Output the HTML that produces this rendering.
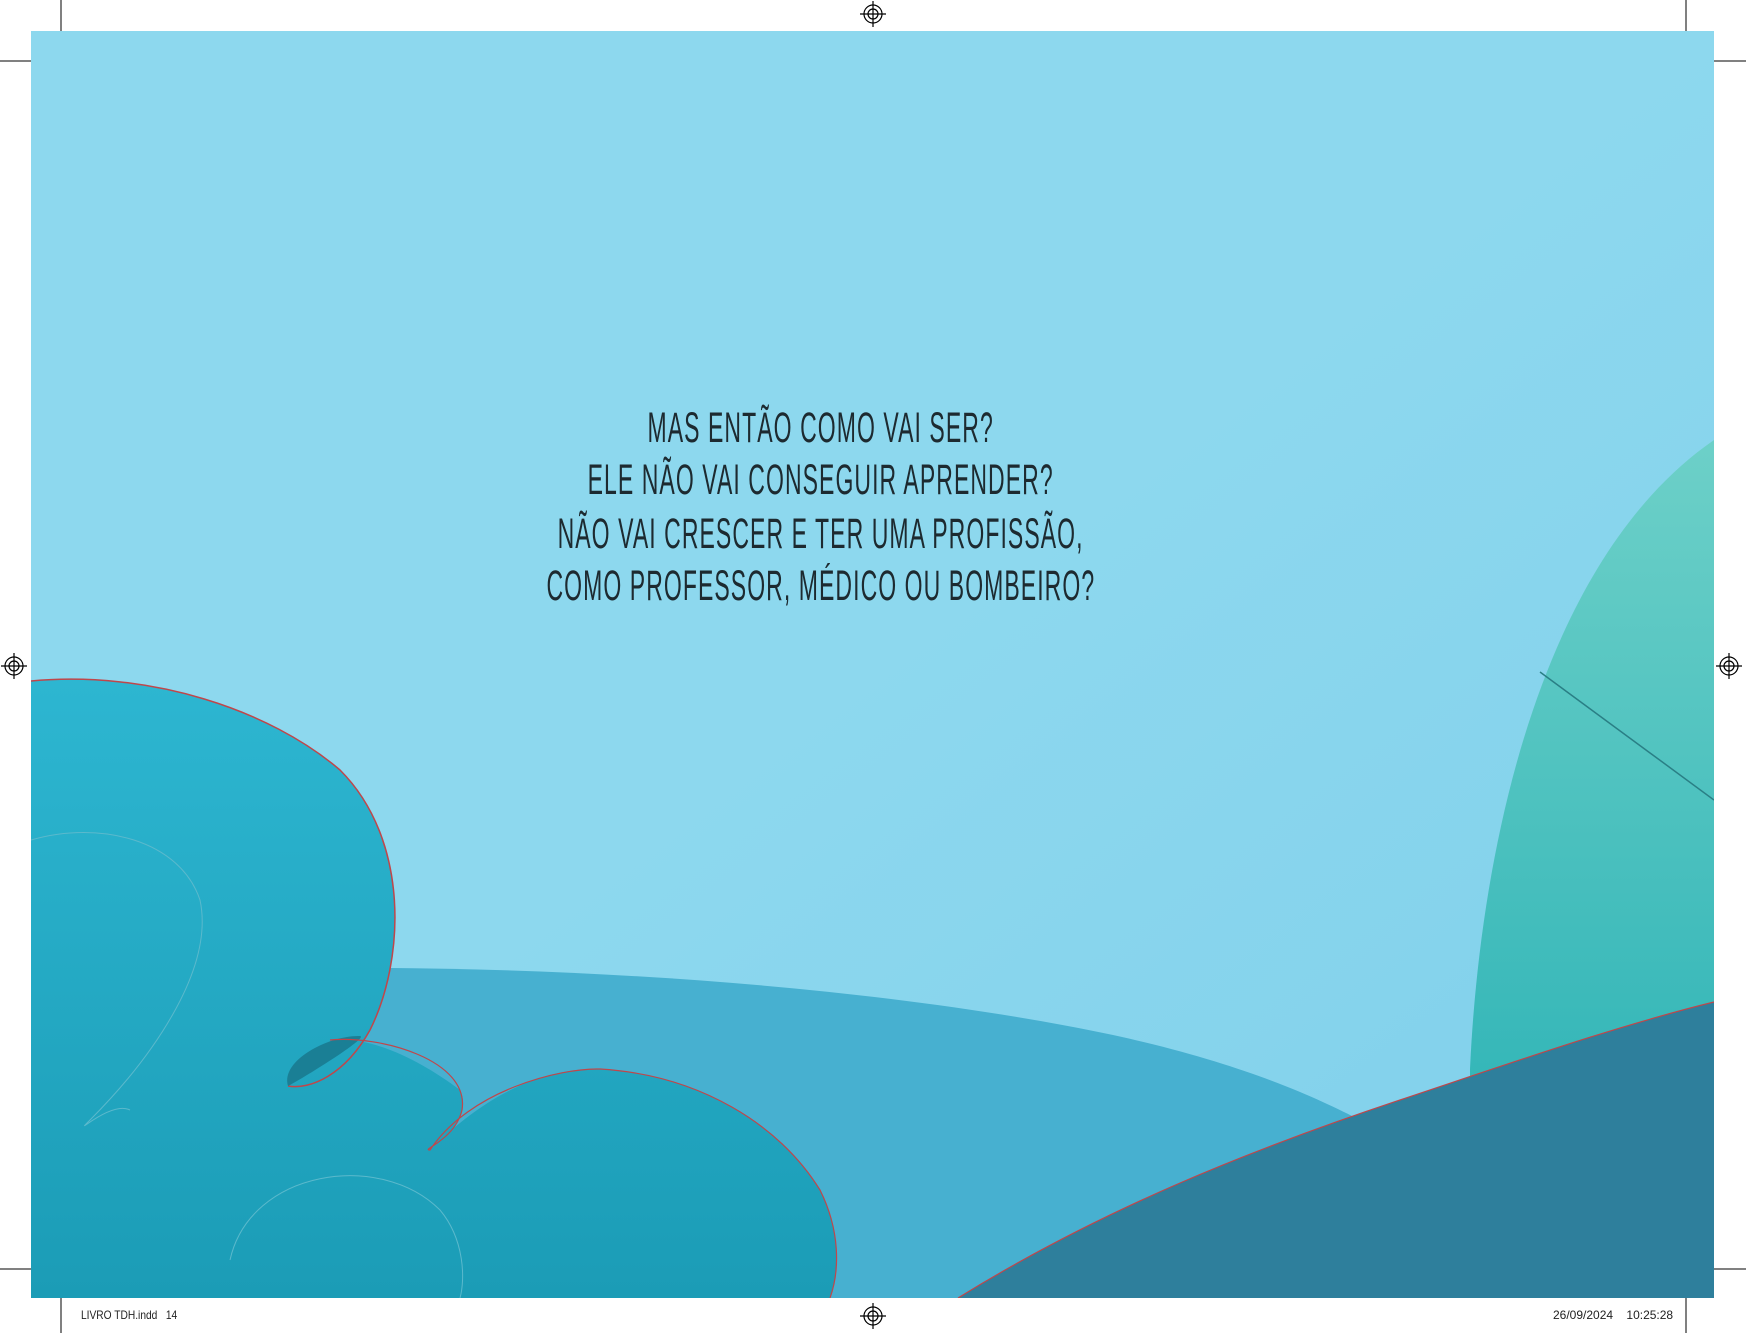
<!DOCTYPE html>
<html><head><meta charset="utf-8"><style>
html,body{margin:0;padding:0;background:#fff;}
body{width:1746px;height:1333px;position:relative;overflow:hidden;font-family:"Liberation Sans",sans-serif;}
.line{position:absolute;left:0;width:1642px;text-align:center;font-size:43px;color:#1d2a30;letter-spacing:2px;}
.line span{display:inline-block;transform:scaleX(0.535);transform-origin:center;white-space:nowrap;}
.ft{position:absolute;font-size:12px;color:#222;transform:scaleX(0.85);transform-origin:left;white-space:nowrap;}
</style></head><body>
<svg width="1746" height="1333" style="position:absolute;left:0;top:0">
<defs>
<linearGradient id="g1" x1="0" y1="0" x2="0" y2="1"><stop offset="0" stop-color="#2db6d1"/><stop offset="1" stop-color="#1b9cb6"/></linearGradient>
<linearGradient id="g2" x1="0" y1="0" x2="0" y2="1"><stop offset="0" stop-color="#6dd0c8"/><stop offset="1" stop-color="#22aeb3"/></linearGradient>
<linearGradient id="sky" x1="0" y1="0" x2="1" y2="1"><stop offset="0.5" stop-color="#8dd8ee"/><stop offset="1" stop-color="#7fcfeb"/></linearGradient>
<clipPath id="art"><rect x="31" y="31" width="1683" height="1267"/></clipPath>
</defs>
<g clip-path="url(#art)">
<rect x="31" y="31" width="1683" height="1267" fill="url(#sky)"/>
<path d="M1470 1069 C1480 850 1540 560 1714 440 L1714 1298 L1470 1298Z" fill="url(#g2)"/>
<path d="M1540 672 L1714 800" stroke="#2a7f85" stroke-width="1.5" fill="none"/>
<path d="M300 968 C600 965 900 990 1113 1035 C1250 1065 1320 1100 1360 1120 L1000 1298 L300 1298Z" fill="#47b0d0"/>
<path d="M31 681 C150 670 270 710 340 770 C410 840 405 960 370 1030 C345 1075 310 1090 288 1086 C270 1082 290 1045 330 1040 C370 1035 420 1060 460 1090 C470 1110 455 1130 430 1150 C500 1080 560 1068 600 1069 C700 1075 780 1125 820 1190 C840 1230 840 1270 830 1298 L31 1298Z" fill="url(#g1)"/>
<path d="M31 681 C150 670 270 710 340 770 C410 840 405 960 370 1030 C345 1075 310 1090 288 1086" stroke="#c0464a" stroke-width="1.5" fill="none"/>
<path d="M288 1086 C280 1060 330 1035 360 1036 C370 1037 300 1080 288 1086Z" fill="#1a7f95"/>
<path d="M330 1040 C380 1035 470 1060 462 1110 C455 1140 420 1150 430 1150 C470 1090 560 1068 600 1069 C700 1075 780 1125 820 1190 C840 1230 840 1270 830 1298" stroke="#c0464a" stroke-width="1.2" fill="none"/>
<path d="M958 1298 C1100 1210 1250 1150 1400 1100 C1520 1060 1620 1025 1714 1002 L1714 1298Z" fill="#2e7f9c"/>
<path d="M958 1298 C1100 1210 1250 1150 1400 1100 C1520 1060 1620 1025 1714 1002" stroke="#c0464a" stroke-width="1.2" fill="none"/>
<path d="M31 840 C100 820 180 840 200 900 C215 970 150 1060 90 1120 C70 1140 110 1100 130 1110" stroke="#5bb9cc" stroke-width="1" fill="none"/>
<path d="M230 1260 C250 1170 380 1150 440 1210 C465 1240 465 1280 460 1298" stroke="#5bb9cc" stroke-width="1" fill="none"/>
</g>
<g stroke="#000" stroke-width="1" fill="none">
<line x1="61" y1="0" x2="61" y2="31"/><line x1="1686" y1="0" x2="1686" y2="31"/>
<line x1="0" y1="61" x2="31" y2="61"/><line x1="1714" y1="61" x2="1746" y2="61"/>
<line x1="0" y1="1269" x2="31" y2="1269"/><line x1="1714" y1="1269" x2="1746" y2="1269"/>
<line x1="61" y1="1298" x2="61" y2="1333"/><line x1="1686" y1="1298" x2="1686" y2="1333"/>
</g>
<g stroke="#000" stroke-width="1.2" fill="none">
<g transform="translate(873,14)"><circle r="9"/><circle r="5"/><line x1="-13" y1="0" x2="13" y2="0"/><line x1="0" y1="-13" x2="0" y2="13"/></g>
<g transform="translate(14,666)"><circle r="9"/><circle r="5"/><line x1="-13" y1="0" x2="13" y2="0"/><line x1="0" y1="-13" x2="0" y2="13"/></g>
<g transform="translate(1729,666)"><circle r="9"/><circle r="5"/><line x1="-13" y1="0" x2="13" y2="0"/><line x1="0" y1="-13" x2="0" y2="13"/></g>
<g transform="translate(873,1316)"><circle r="9"/><circle r="5"/><line x1="-13" y1="0" x2="13" y2="0"/><line x1="0" y1="-13" x2="0" y2="13"/></g>
</g>
</svg>
<div class="line" style="top:404px"><span>MAS ENTÃO COMO VAI SER?</span></div>
<div class="line" style="top:456px"><span>ELE NÃO VAI CONSEGUIR APRENDER?</span></div>
<div class="line" style="top:510px"><span>NÃO VAI CRESCER E TER UMA PROFISSÃO,</span></div>
<div class="line" style="top:562px"><span>COMO PROFESSOR, MÉDICO OU BOMBEIRO?</span></div>
<div class="ft" style="left:81px;top:1308px">LIVRO TDH.indd&nbsp;&nbsp;&nbsp;14</div>
<div class="ft" style="left:1553px;top:1308px;transform:scaleX(1);">26/09/2024&nbsp;&nbsp;&nbsp;&nbsp;10:25:28</div>
</body></html>
